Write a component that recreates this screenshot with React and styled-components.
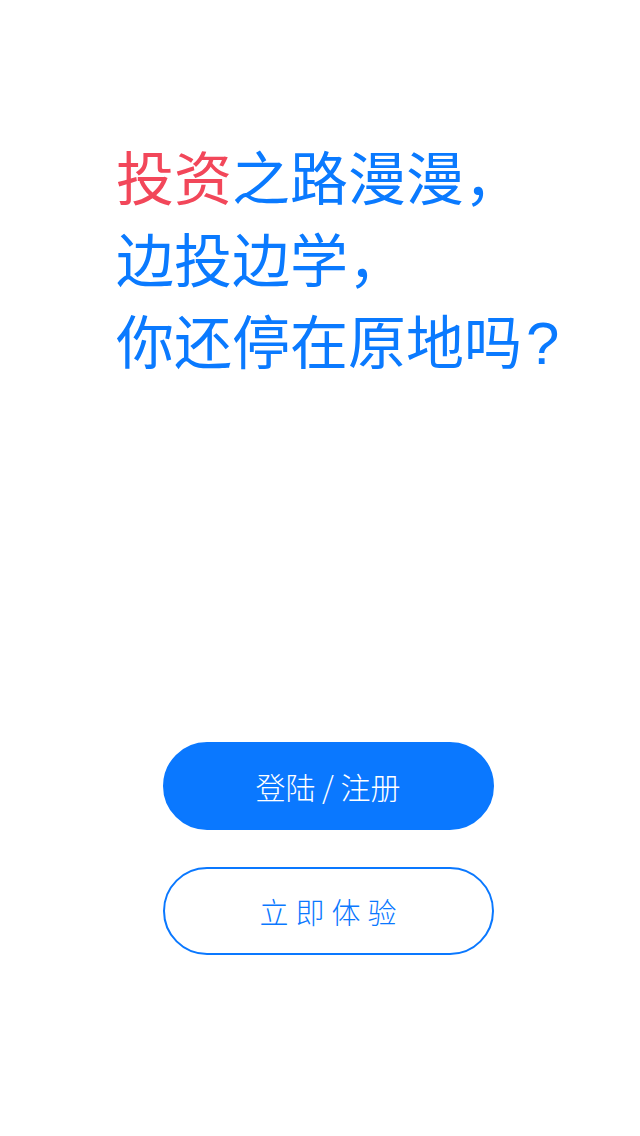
import styled, { createGlobalStyle } from "styled-components";

const GlobalStyle = createGlobalStyle`
  html, body {
    margin: 0;
    padding: 0;
    background: #ffffff;
  }
  body {
    font-family: "Noto Sans CJK SC", "Noto Sans", sans-serif;
  }
`;

const Page = styled.div`
  width: 640px;
  min-height: 1136px;
  display: flex;
  flex-direction: column;
  align-items: stretch;
  box-sizing: border-box;
`;

const Headline = styled.h1`
  margin: 0;
  padding: 134px 0 0 116px;
  font-size: 58px;
  line-height: 82px;
  font-weight: 400;
  color: #0a7aff;
  letter-spacing: 0;
`;

const Red = styled.span`
  color: #f2475a;
`;

const Question = styled.span`
  font-family: "Liberation Sans", "Noto Sans", sans-serif;
  font-size: 60px;
  line-height: 0;
  margin-left: 4px;
`;

const Actions = styled.div`
  margin-top: 362px;
  padding-left: 16px;
  display: flex;
  flex-direction: column;
  align-items: center;
  gap: 37px;
`;

const Btn = styled.button`
  width: 331px;
  height: 88px;
  box-sizing: border-box;
  border-radius: 44px;
  border: 2px solid #0a78ff;
  background: ${(p) => (p.$outline ? "#ffffff" : "#0a78ff")};
  color: ${(p) => (p.$outline ? "#0a78ff" : "#ffffff")};
  font-family: "Noto Sans CJK SC", sans-serif;
  font-size: ${(p) => (p.$outline ? "29px" : "30px")};
  font-weight: 300;
  letter-spacing: ${(p) => (p.$outline ? "7px" : "0")};
  padding: 0;
  padding-left: ${(p) => (p.$outline ? "7px" : "0")};
  display: flex;
  align-items: center;
  justify-content: center;
  cursor: pointer;
`;

function App() {
  return (
    <Page>
      <GlobalStyle />
      <Headline>
        <Red>投资</Red>之路漫漫，
        <br />
        边投边学，
        <br />
        你还停在原地吗<Question>?</Question>
      </Headline>
      <Actions>
        <Btn>登陆 / 注册</Btn>
        <Btn $outline>立即体验</Btn>
      </Actions>
    </Page>
  );
}

export default App;
